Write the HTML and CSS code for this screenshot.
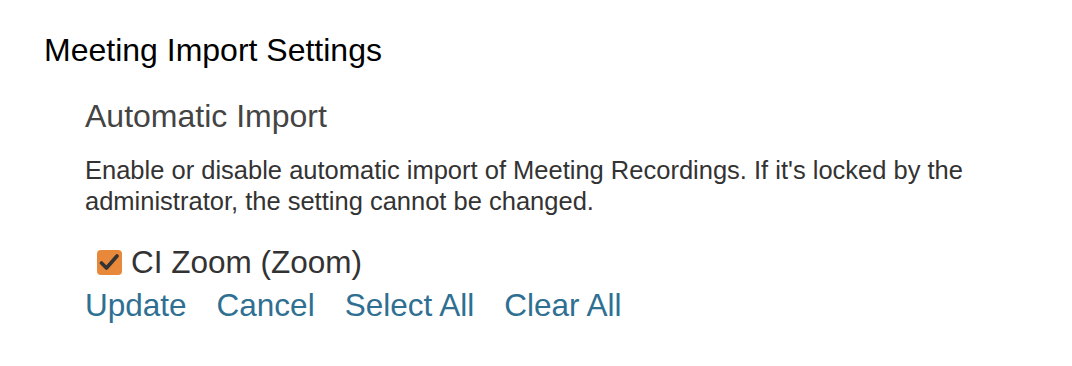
FILE: index.html
```html
<!DOCTYPE html>
<html lang="en">
<head>
    <meta charset="UTF-8">
    <meta name="viewport" content="width=device-width, initial-scale=1.0">
    <title>Meeting Import Settings</title>
    <link rel="stylesheet" href="styles.css">
</head>
<body>

    <div class="settings">
        <h1>Meeting Import Settings</h1>

        <div class="section">
            <h2>Automatic Import</h2>
            <p class="help">Enable or disable automatic import of Meeting Recordings. If it's locked by the administrator, the setting cannot be changed.</p>

            <label class="check-row">
                <span class="check-box">
                    <svg viewBox="0 0 25 25" width="25" height="25">
                        <path d="M4.5 13 L9.5 18 L20 6" fill="none" stroke="#333" stroke-width="3.6" stroke-linecap="round" stroke-linejoin="round"/>
                    </svg>
                </span>
                CI Zoom (Zoom)
            </label>

            <div class="actions">
                <a href="#">Update</a>
                <a href="#">Cancel</a>
                <a href="#">Select All</a>
                <a href="#">Clear All</a>
            </div>
        </div>
    </div>

</body>
</html>
```

FILE: styles.css
```css
body {
    font-family: "Liberation Sans", Arial, sans-serif;
    background-color: #fff;
    margin: 0;
    padding: 0;
}

.settings {
    padding: 30px 0 0 44px;
}

h1 {
    font-size: 32px;
    font-weight: normal;
    color: #000;
    margin: 0;
    line-height: 40px;
}

.section {
    padding-left: 41px;
}

h2 {
    font-size: 32px;
    font-weight: normal;
    color: #444;
    margin: 26px 0 0 0;
    line-height: 40px;
}

.help {
    font-size: 25.5px;
    color: #333;
    line-height: 31px;
    margin: 19px 0 0 0;
}

.check-row {
    display: flex;
    align-items: center;
    gap: 9px;
    font-size: 31.5px;
    color: #333;
    margin: 25px 0 0 12px;
    line-height: 40px;
}

.check-box {
    width: 25px;
    height: 25px;
    background-color: #e8883a;
    border-radius: 4px;
    display: flex;
}

.actions {
    display: flex;
    gap: 30px;
    line-height: 46px;
}

.actions a {
    font-size: 31.5px;
    color: #2f6f92;
    text-decoration: none;
}
```
